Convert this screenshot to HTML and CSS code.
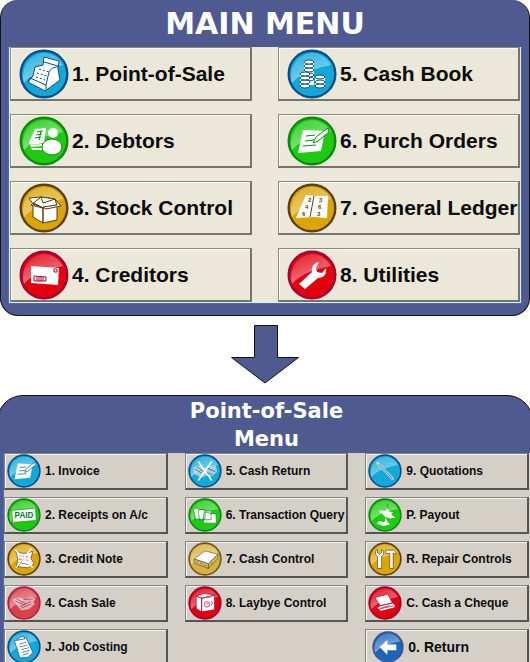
FILE: index.html
```html
<!DOCTYPE html>
<html lang="en">
<head>
<meta charset="utf-8">
<title>Main Menu</title>
<link rel="stylesheet" href="styles.css">
</head>
<body>
<svg class="defs" aria-hidden="true">
  <defs>
    <linearGradient id="gloss" x1="0" y1="0" x2="0.5" y2="1">
      <stop offset="0" stop-color="#fff" stop-opacity="0.1"/>
      <stop offset="1" stop-color="#fff" stop-opacity="0.5"/>
    </linearGradient>
    <symbol id="disc" viewBox="0 0 50 50">
      <circle class="face" cx="25" cy="25" r="23.3"/>
      <path fill="url(#gloss)" d="M5 34C1 20 10 5 25 4c9 0 15 5 19 12C30 19 14 23 5 34z"/>
    </symbol>
    <symbol id="sheet" viewBox="0 0 50 50">
      <path class="w" d="M16 14l22 1-4 20-23 2z"/>
      <path class="l" d="M19 20l9-1M18 25l9-1M16 30l13-1"/>
      <path class="w l" d="M26 27l3-6 12-9 1 4-11 9z"/>
    </symbol>
  </defs>
</svg>

<section class="panel main">
  <h1>MAIN MENU</h1>
  <nav class="grid">
    <button class="cyan"><svg viewBox="0 0 50 50"><use href="#disc"/><path class="w l" d="M24 16l1-8 15 4-1 8 2 11-15 11-17-9 5-6 2-9z"/><path class="l" d="M9 32l2-3 16 7 3-13c2-4 5-5 9-5M25 13l14 4M27 36v5"/><path class="dots" d="M20 20l10 3M18 24l10 3M17 28l9 3"/></svg><span>1. Point-of-Sale</span></button>
    <button class="cyan"><svg viewBox="0 0 50 50"><use href="#disc"/><path class="w" d="M17 13h10v23H17zM13 25h10v13H13zM28 28h10v10H28z"/><g class="w l"><ellipse cx="22" cy="30" rx="5" ry="2"/><ellipse cx="22" cy="26" rx="5" ry="2"/><ellipse cx="22" cy="21" rx="5" ry="2"/><ellipse cx="22" cy="17" rx="5" ry="2"/><ellipse cx="22" cy="13" rx="5" ry="2"/><ellipse cx="18" cy="37" rx="5" ry="2"/><ellipse cx="18" cy="33" rx="5" ry="2"/><ellipse cx="18" cy="29" rx="5" ry="2"/><ellipse cx="18" cy="25" rx="5" ry="2"/><ellipse cx="33" cy="37" rx="5" ry="2"/><ellipse cx="33" cy="33" rx="5" ry="2"/><ellipse cx="33" cy="28" rx="5" ry="2"/></g></svg><span>5. Cash Book</span></button>
    <button class="green"><svg viewBox="0 0 50 50"><use href="#disc"/><path class="w" d="M10 27l6-14 11-1-2 15-13 2z"/><path class="w" d="M11 29l13-1v2l-12 1zM12 32h12v2H13z"/><path class="l" d="M18 16l6-1M17 19l6-1M16 22l6-1M22 15l-2 9"/><circle class="w" cx="34" cy="17" r="5"/><ellipse class="w l" cx="33" cy="31" rx="10" ry="8"/></svg><span>2. Debtors</span></button>
    <button class="green"><svg viewBox="0 0 50 50"><use href="#disc"/><use href="#sheet"/></svg><span>6. Purch Orders</span></button>
    <button class="gold"><svg viewBox="0 0 50 50"><use href="#disc"/><path class="w l" d="M14 20l10 5v15l-10-6zM24 25l14-3v15l-14 3zM14 20l8-6 14 2 2 6-14 3z"/><path class="w l" d="M22 14l-12 1 4 6 10 4-12-3zM36 16l6 7-15 3-3-2 14-2zM22 14l2 6 12-4z"/></svg><span>3. Stock Control</span></button>
    <button class="gold"><svg viewBox="0 0 50 50"><use href="#disc"/><path class="w" d="M19 12l9 1h13l-1 22-13-1-18 1z"/><path class="l" d="M27 13l-4 21"/><g class="digits"><text x="21" y="19">2</text><text x="18" y="26">4</text><text x="15" y="33">6</text><text x="32" y="19">3</text><text x="31" y="26">6</text><text x="30" y="33">3</text></g></svg><span>7. General Ledger</span></button>
    <button class="red"><svg viewBox="0 0 50 50"><use href="#disc"/><path class="w" d="M12 16l28 2-1 17-27-2z"/><path class="l" d="M35 19h3v3h-3zM15 26l12 1v4H15zM17 28h8M17 30h8"/></svg><span>4. Creditors</span></button>
    <button class="red"><svg viewBox="0 0 50 50"><use href="#disc"/><path class="w" d="M12 34l13-12c-1-5 2-9 7-10l-3 6 1 4 5 1 4-5c1 6-2 10-8 10L18 39z"/></svg><span>8. Utilities</span></button>
  </nav>
</section>

<svg class="arrow" viewBox="0 0 70 60" role="img" aria-label="leads to"><path d="M24.500 1.500h23v32h21L35 59 1.500 33.500h23z"/></svg>

<section class="panel sub">
  <h2>Point-of-Sale<br>Menu</h2>
  <nav class="grid">
    <button class="cyan"><svg viewBox="0 0 50 50"><use href="#disc"/><use href="#sheet"/></svg><span>1. Invoice</span></button>
    <button class="cyan"><svg viewBox="0 0 50 50"><use href="#disc"/><path class="pale" d="M8 20l12-4 4 5 6-3 11-1 2 9-8 7-9-1-7 3-10-6z"/><path class="l" d="M10 22l10 6M13 19l9 6M29 21l11 5M28 27l8 4"/><path class="cross" d="M15 11l20 28M35 11L15 39"/></svg><span>5. Cash Return</span></button>
    <button class="cyan"><svg viewBox="0 0 50 50"><use href="#disc"/><path class="rod" d="M14 13l22 23"/><path class="l" d="M16 15l20 21"/></svg><span>9. Quotations</span></button>
    <button class="green"><svg viewBox="0 0 50 50"><use href="#disc"/><path class="w l" d="M7 18l35-3 1 18-35 3z"/><text class="paid" x="25" y="30">PAID</text></svg><span>2. Receipts on A/c</span></button>
    <button class="green"><svg viewBox="0 0 50 50"><use href="#disc"/><path class="w l" d="M8 17l2-2h5l1 2h9v14H11zM15 19l2-2h6l1 2h10v13H17zM23 24l2-3h6l1 2h9l1 14H23z"/></svg><span>6. Transaction Query</span></button>
    <button class="green"><svg viewBox="0 0 50 50"><use href="#disc"/><path class="l" d="M29 8v12"/><path class="w" d="M17 18l8 1 4-4 2 5 6 1-3 3 6 5-8 1-8-3-3-4-4-1zM13 38c1-4 6-5 9-2 4-3 8-1 10 3l-9 2zM25 28l4 7-4 2z"/></svg><span>P. Payout</span></button>
    <button class="gold"><svg viewBox="0 0 50 50"><use href="#disc"/><path class="w l" d="M13 14l12 3 13-3-3 10 5 8-9 6-17-2 2-11z"/><path class="l" d="M18 20l13 2M17 25l14 2M17 30l14 3M14 12l24 26M34 10L15 38"/><path class="cross" d="M12 11l26 27M36 9L13 38"/></svg><span>3. Credit Note</span></button>
    <button class="gold pale-gold"><svg viewBox="0 0 50 50"><use href="#disc"/><path class="w l" d="M9 25l16-12 19 5-14 14z"/><path class="side l" d="M9 25l21 7v7L9 31zM30 32l14-14v6L30 39z"/><path class="l" d="M12 29l3 1M18 31l3 1M24 34l3 1M33 33l3-3"/></svg><span>7. Cash Control</span></button>
    <button class="gold"><svg viewBox="0 0 50 50"><use href="#disc"/><path class="w l" d="M14 11v5l3 2 3-2v-5c4 2 4 8 0 10v18h-6V21c-4-2-4-8 0-10zM26 12h12l3 3v3l-4-2v23h-5V17h-6z"/></svg><span>R. Repair Controls</span></button>
    <button class="red faded"><svg viewBox="0 0 50 50"><use href="#disc"/><path class="pale" d="M8 19l11-2 7 3 9-4 7 2-3 6 2 2-8 8-12 2-7-8z"/><path class="l" d="M12 22l14 6M14 19l14 7M20 30l15-7M20 33l15-6M24 20l14-1"/></svg><span>4. Cash Sale</span></button>
    <button class="red"><svg viewBox="0 0 50 50"><use href="#disc"/><path class="w l" d="M12 15l11-4 16 2-5 3-14 2zM12 15l8 3v20l-8-5zM20 18l19-5v22l-19 3z"/><circle class="l" cx="28" cy="27" r="4"/><path class="l" d="M34 22l2 3-2 4M27 27l3-2"/></svg><span>8. Laybye Control</span></button>
    <button class="red"><svg viewBox="0 0 50 50"><use href="#disc"/><path class="w l" d="M10 17l19-5 7 13-18 4zM18 29l18-4 4 3-1 4-20 5-6-5z"/><path class="l" d="M16 34l22-5M20 32l12-3"/></svg><span>C. Cash a Cheque</span></button>
    <button class="cyan"><svg viewBox="0 0 50 50"><use href="#disc"/><path class="w l" d="M11 16l17-5 10 22-7 7-12 1z"/><path class="w l" d="M15 15l3-4 6-2 2 4z"/><path class="l" d="M18 21l10-3M19 25l11-3M21 29l11-3M22 33l11-3M23 37l9-3"/></svg><span>J. Job Costing</span></button>
    <button class="blue return"><svg viewBox="0 0 50 50"><use href="#disc"/><path class="w" d="M12 25l12-11v7h14v9H24v7z"/></svg><span>0. Return</span></button>
  </nav>
</section>
</body>
</html>
```
FILE: styles.css
```css
* { box-sizing: border-box; }

body {
  margin: 0;
  height: 100vh;
  overflow: hidden;
  background: #fff;
  font-family: "Liberation Sans", Arial, sans-serif;
}

.defs { position: absolute; width: 0; height: 0; }

.panel {
  background: #4f5a91;
  border: 1px solid #111;
}

h1, h2 {
  margin: 0;
  color: #fff;
  font-family: "DejaVu Sans", Verdana, sans-serif;
  font-weight: bold;
  text-align: center;
}

.grid { display: grid; }

button {
  display: flex;
  align-items: center;
  min-width: 0;
  padding: 0;
  border: 1px solid;
  border-radius: 0;
  background: none;
  color: #0c0c0c;
  font-family: inherit;
  font-weight: bold;
  text-align: left;
  white-space: nowrap;
}

button svg { flex: none; }

/* Main menu */
.main {
  border-top: 0;
  border-radius: 18px;
  padding: 0 7px 11px;
}

.main h1 { font-size: 30px; line-height: 47px; }

.main .grid {
  grid-template-columns: 1fr 1fr;
  gap: 13px 26px;
  padding: 0 1px 1px;
  border: 1px solid #3973b5;
  border-top: 0;
  background: #ebe8d9;
}

.main button {
  height: 54px;
  padding-left: 8px;
  gap: 3px;
  border-color: #8c8a7c #77756a #77756a #8c8a7c;
  border-right-width: 2px;
  border-bottom-width: 2px;
  box-shadow: inset 1px 1px #faf9f2;
  font-size: 21px;
}

.main button svg { width: 50px; height: 50px; }

.arrow {
  display: block;
  width: 70px;
  height: 60px;
  margin: 8px auto 11px;
}

.arrow path { fill: #4f5a91; stroke: #111; }

/* Point-of-sale menu, running past both window edges */
.sub {
  margin: 0 -3px;
  border-radius: 26px 26px 0 0;
  padding: 0 2px 0 5px;
}

.sub h2 { padding-top: 1px; font-size: 21px; line-height: 28px; }

.sub .grid {
  grid-template-columns: repeat(3, 1fr);
  gap: 7px 17px;
  padding: 0 1px 8px 0;
  border-left: 1px solid #3973b5;
  background: #d4d0c8;
}

.sub button {
  height: 37px;
  padding-left: 2px;
  gap: 4px;
  border-color: #86847f #555 #555 #86847f;
  border-right-width: 2px;
  border-bottom-width: 2px;
  box-shadow: inset 1px 1px #f4f2ee;
  font-size: 12px;
}

.sub button svg { width: 34px; height: 34px; }

.sub .return {
  grid-column: 3;
  padding-left: 6px;
  font-size: 14px;
}

.sub .return svg { width: 32px; height: 32px; }

/* Icon colours */
.cyan { --disc: #12a9d8; --rim: #0b4f88; }
.green { --disc: #1fcb12; --rim: #0b8a12; }
.gold { --disc: #dba506; --rim: #5e3f10; }
.pale-gold { --disc: #d8b040; --rim: #6b5a1c; }
.red { --disc: #e2000f; --rim: #a00634; }
.faded { --disc: #d8404a; --rim: #b02048; }
.blue { --disc: #1c66ba; --rim: #3b5690; }

.face { fill: var(--disc); stroke: var(--rim); stroke-width: 2.400; }
.l { fill: none; stroke: var(--rim); stroke-width: 1; }
.w { fill: #fff; }
.pale { fill: #e6dfe4; opacity: 0.7; }
.side { fill: #c9b878; }
.dots { fill: none; stroke: var(--rim); stroke-width: 1; stroke-dasharray: 2 2; }
.cross { fill: none; stroke: #fff; stroke-width: 2; }
.rod { fill: none; stroke: #c4d6e0; stroke-width: 4; stroke-linecap: round; }
.digits { fill: var(--rim); font-size: 6px; }
.paid { fill: #0b7a30; font-size: 12px; text-anchor: middle; }
```
